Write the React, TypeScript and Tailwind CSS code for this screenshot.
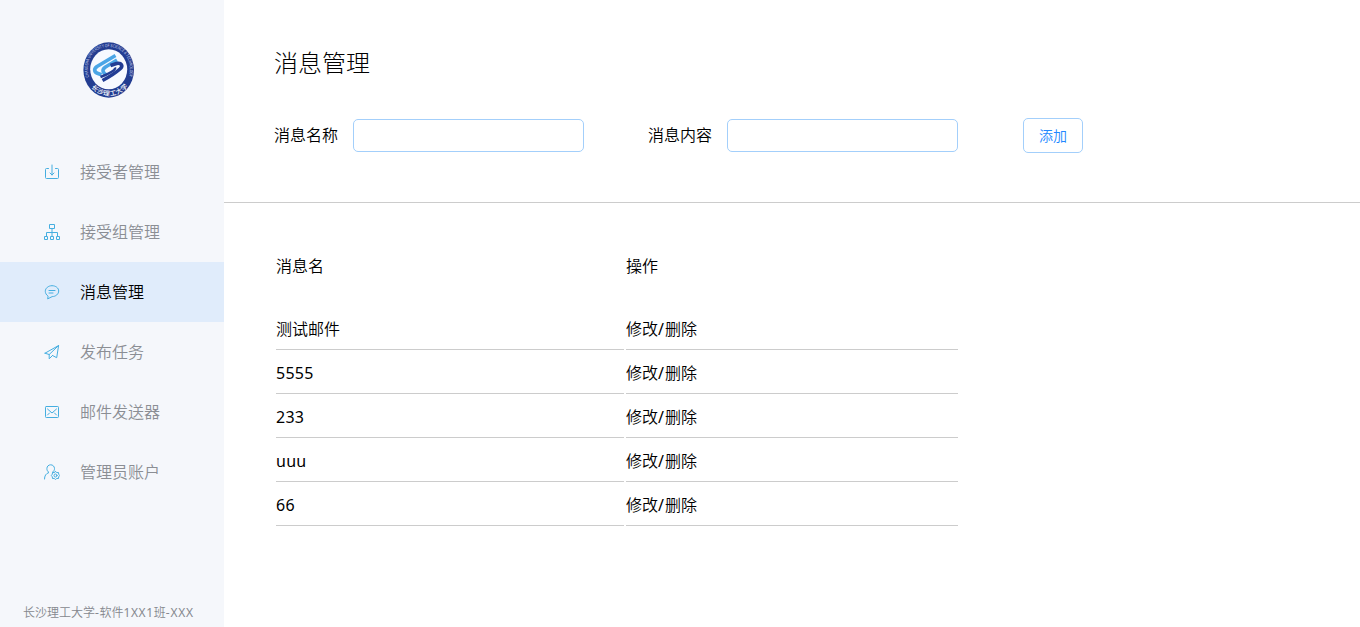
import type { ReactNode } from "react";

function Icon({ children }: { children: ReactNode }) {
  return (
    <svg
      viewBox="0 0 16 16"
      className="h-4 w-4 shrink-0"
      fill="none"
      stroke="#45aee0"
      strokeWidth="1"
      strokeLinecap="round"
      strokeLinejoin="round"
    >
      {children}
    </svg>
  );
}

const menu: { label: string; icon: ReactNode; active?: boolean }[] = [
  {
    label: "接受者管理",
    icon: <path d="M4.500 4.500H2.500a1 1 0 0 0-1 1v8a1 1 0 0 0 1 1h11a1 1 0 0 0 1-1v-8a1 1 0 0 0-1-1h-2M8 1v10M6 9l2 2 2-2" />,
  },
  {
    label: "接受组管理",
    icon: (
      <path
        strokeLinecap="butt"
        strokeLinejoin="miter"
        d="M5.500.5h5v4h-5zM.5 12.500h3v3h-3zM6.500 12.500h3v3h-3zM12.500 12.500h3v3h-3zM8 5v7M2.500 12V8.500h11V12"
      />
    ),
  },
  {
    label: "消息管理",
    active: true,
    icon: <path d="M3.800 12C2.200 10.800 1.300 9 1.300 7.300 1.300 4.200 4.300 1.700 8 1.700s6.700 2.300 6.700 5.300-3 5.600-6.500 5.600L4 14.700zM5 6.500h6M5 9h4" />,
  },
  {
    label: "发布任务",
    icon: <path d="M1 9.200 14.600 1.500 12.700 13.700 8.500 11.500M1 9.200l4.200 1.300L14.600 1.500M5.200 10.500v4.300L8.500 11.500" />,
  },
  {
    label: "邮件发送器",
    icon: (
      <>
        <rect x="1.500" y="2.500" width="13" height="11" rx="0.800" />
        <path d="m3.500 5 4.500 4 4.500-4M3.500 11l2-2M12.500 11l-2-2" />
      </>
    ),
  },
  {
    label: "管理员账户",
    icon: (
      <>
        <path d="M.5 15c0-3.200 1.400-5.500 4.500-6.500C3.500 7.500 2.900 6.200 2.900 4.600 2.900 2.300 4.600.8 6.700.8s3.800 1.600 3.800 3.800c0 1.600-.7 2.800-2 3.600" />
        <path d="m11.500 7.500 1.300 1.100 1.700-.1.200 1.700 1 1.300-1 1.300-.2 1.700-1.700-.1-1.300 1.100-1.300-1.100-1.700.1-.2-1.700-1-1.300 1-1.300.2-1.700 1.700.1z" />
        <circle cx="11.500" cy="11.500" r="1.500" />
      </>
    ),
  },
];

const messages = ["测试邮件", "5555", "233", "uuu", "66"];

function Logo() {
  return (
    <svg viewBox="0 0 52 56" className="h-14 w-[52px]" role="img">
      <defs>
        <path id="seal-top" d="M6 35C1 15 13 5 25.500 5S50 15 46 35" />
        <path id="seal-bottom" d="M7 44C16 57 36 57 45 44" />
      </defs>
      <ellipse cx="25.700" cy="28" rx="25.300" ry="27.700" fill="#233d91" />
      <ellipse cx="25.700" cy="27.300" rx="18.500" ry="20" fill="#f6f9ff" />
      <text className="font-['Liberation_Sans']" fill="#c3cdea" fontSize="4.600">
        <textPath href="#seal-top" textLength="84" lengthAdjust="spacingAndGlyphs">CHANGSHA UNIVERSITY OF SCIENCE &amp; TECHNOLOGY</textPath>
      </text>
      <text className="font-['Noto_Sans_CJK_SC'] font-medium" fill="#ffffff" fontSize="6.500">
        <textPath href="#seal-bottom" startOffset="2" textLength="42">长沙理工大学</textPath>
      </text>
      <g fill="none" strokeWidth="3.600" strokeLinejoin="round">
        <path stroke="#4aa5e6" d="M32.500 13.500 14 24.500c-3.500 2.500-3 5.500 1 7l3.500 1.300" />
        <path stroke="#4aa5e6" d="M34 18 22.500 25c-3.500 2.500-3.500 5 1 8" />
        <path stroke="#213c94" d="M27.500 23.500 33.500 21.500c5-1 7 2.500 3.500 5.500C33 30.500 29 33.500 19.500 38.500" />
        <path stroke="#213c94" strokeWidth="2.500" d="M32 25.500c1 2.500-6 6.500-14.500 9.500" />
      </g>
    </svg>
  );
}

function Field({ label }: { label: string }) {
  return (
    <label className="flex items-center">
      <span className="w-[79px] pb-0.5 text-base">{label}</span>
      <input className="h-[33px] w-[231px] rounded-[5px] border border-[#a3cffb] bg-white px-2 outline-none" />
    </label>
  );
}

export default function App() {
  return (
    <div className="flex h-[627px] w-[1360px] overflow-hidden bg-white font-['Noto_Sans','Noto_Sans_CJK_SC',sans-serif] font-[350] text-black">
      <aside className="flex w-56 shrink-0 flex-col bg-[#f5f7fb]">
        <div className="flex h-[142px] pt-[42px] pl-[83px]">
          <Logo />
        </div>
        <nav>
          {menu.map((item) => (
            <a
              key={item.label}
              className={
                item.active
                  ? "flex h-[60px] items-center gap-5 bg-[#e0ecfb] pl-11 text-base text-black"
                  : "flex h-[60px] items-center gap-5 pl-11 text-base text-[#8b8e94]"
              }
            >
              <Icon>{item.icon}</Icon>
              <span>{item.label}</span>
            </a>
          ))}
        </nav>
        <footer className="mt-auto pb-[5px] pl-[23px] text-xs leading-[18px] whitespace-nowrap text-[#85888e]">
          长沙理工大学<span className="font-normal tracking-[0.6px]">-</span>软件
          <span className="font-normal tracking-[0.6px]">1XX1</span>班
          <span className="font-normal tracking-[0.8px]">-XXX</span>
        </footer>
      </aside>
      <main className="min-w-0 flex-1">
        <section className="h-[203px] border-b border-[#cccccc] pt-[43px] pl-[50px]">
          <h1 className="text-2xl leading-10 font-light">消息管理</h1>
          <form className="mt-[35px] flex items-center">
            <Field label="消息名称" />
            <div className="w-16" />
            <Field label="消息内容" />
            <button
              type="button"
              className="ml-[65px] h-[35px] w-[60px] rounded-[5px] border border-[#a3cffb] text-sm text-[#2288ff]"
            >
              添加
            </button>
          </form>
        </section>
        <section className="grid w-[734px] grid-cols-[348px_332px] gap-x-0.5 gap-y-0.5 pt-[43px] pl-[52px] text-base">
          <div className="flex h-[60px] items-start pt-2 leading-6">消息名</div>
          <div className="flex h-[60px] items-start pt-2 leading-6">操作</div>
          {messages.map((name) => (
            <div key={name} className="contents">
              <div
                className={
                  /^\w+$/.test(name)
                    ? "flex h-[42px] items-center border-b border-[#cccccc] font-normal tracking-[0.25px]"
                    : "flex h-[42px] items-center border-b border-[#cccccc]"
                }
              >
                {name}
              </div>
              <div className="flex h-[42px] items-center border-b border-[#cccccc]">
                修改<span className="pr-px font-normal">/</span>删除
              </div>
            </div>
          ))}
        </section>
      </main>
    </div>
  );
}
